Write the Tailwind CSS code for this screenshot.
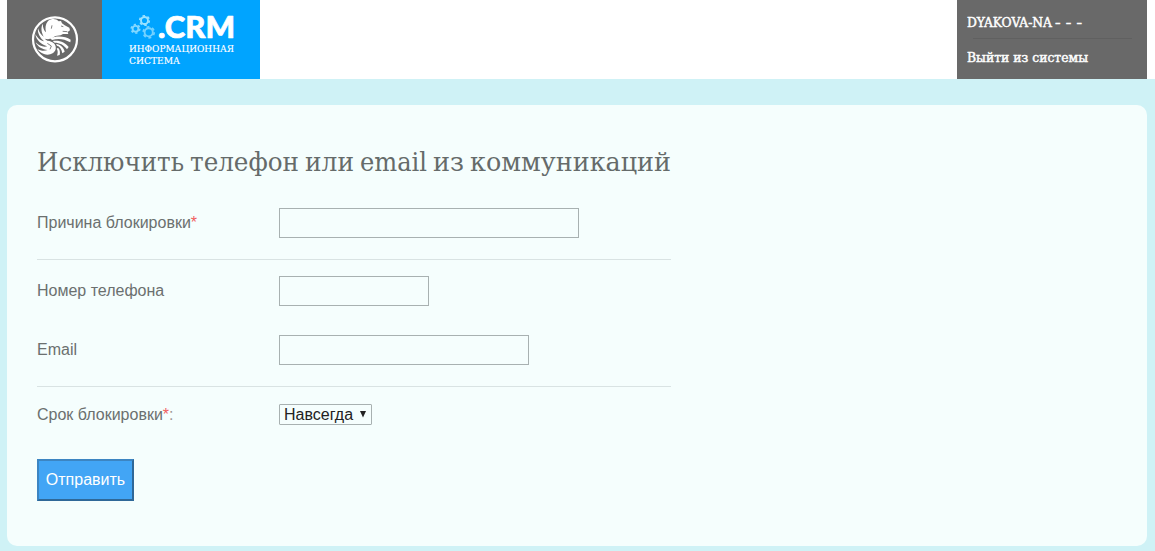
<!DOCTYPE html>
<html lang="ru">
<head>
<meta charset="utf-8">
<title>CRM</title>
<script src="https://cdn.jsdelivr.net/npm/@tailwindcss/browser@4"></script>
</head>
<body class="h-[551px] overflow-hidden bg-[#cff2f6] font-['Liberation_Sans',Arial,sans-serif] text-base text-[#6b706f]">
<header class="flex h-[79px] justify-between bg-white px-[7px] pr-2">
  <div class="flex">
    <div class="flex w-[95px] items-center justify-center bg-[#696969]">
      <svg class="h-[79px] w-[95px]" viewBox="0 0 95 79" fill="#fff">
        <circle cx="48" cy="39.300" r="22" fill="none" stroke="#fff" stroke-width="2.200"/>
        <g transform="translate(21 12) scale(.3333)">
          <path d="M60 27C72 18 84 20 92 28L99 27 102 34 110 40 124 47 126 55 119 60 121 66 105 66 98 70 82 72 72 79 60 82 50 80 58 86C76 88 86 98 83 112 79 126 62 131 48 126 38 122 32 117 28 111 38 117 50 118 59 114 44 113 29 105 23 91 34 102 46 106 58 103 40 98 24 84 22 66 30 80 38 86 48 88 36 77 28 64 30 49 34 62 40 70 47 74 40 60 38 48 44 35 45 48 48 56 54 61 51 48 52 36 60 27Z"/>
          <path d="M66 78C88 70 112 72 128 83L127 91C108 80 90 78 72 84ZM74 87C94 83 112 91 122 105L117 112C107 98 95 92 80 92ZM84 96C98 98 107 106 110 119L103 124C101 111 95 103 87 101ZM90 107C96 113 97 121 95 129L87 131C90 123 90 115 86 110Z"/>
          <path d="M72 40 70 50M99 42 106 44M104 58 118 59M58 94 70 102 66 112" fill="none" stroke="#696969" stroke-width="2.500"/>
        </g>
      </svg>
    </div>
    <svg class="h-[79px] w-[158px] bg-[#00a4ff]" viewBox="0 0 158 79" fill="#fff">
      <g fill="none" stroke="#9be2ff" stroke-width="1.900">
        <g><circle cx="42.500" cy="20.500" r="3.500"/><circle cx="42.500" cy="20.500" r="4.800" stroke-width="1.600" stroke-dasharray="2.500 2.526"/></g>
        <g opacity=".85"><circle cx="33.500" cy="28.800" r="2.900"/><circle cx="33.500" cy="28.800" r="4.300" stroke-width="1.600" stroke-dasharray="2.250 2.253"/></g>
        <g opacity=".75"><circle cx="46.700" cy="32.300" r="4.100"/><circle cx="46.700" cy="32.300" r="5.500" stroke-width="1.700" stroke-dasharray="2.900 2.860"/></g>
      </g>
      <text x="56" y="37.500" textLength="77" lengthAdjust="spacingAndGlyphs" font-family="Lato, sans-serif" font-weight="900" font-size="30" stroke="#fff" stroke-width=".7" stroke-linejoin="round">.CRM</text>
      <g font-family="'DejaVu Serif Condensed', 'DejaVu Serif', serif" font-size="10" stroke="#fff" stroke-width=".15">
        <text x="27" y="51.500" textLength="105" lengthAdjust="spacingAndGlyphs">ИНФОРМАЦИОННАЯ</text>
        <text x="27" y="64" textLength="51" lengthAdjust="spacingAndGlyphs">СИСТЕМА</text>
      </g>
    </svg>
  </div>
  <div class="w-[190px] bg-[#696969] text-white">
    <svg class="h-[79px] w-[190px]" viewBox="0 0 190 79" fill="#fff" font-family="'DejaVu Serif Condensed', 'DejaVu Serif', serif" font-size="12" stroke="#fff" stroke-width=".4">
      <text x="10" y="27" textLength="85" lengthAdjust="spacingAndGlyphs">DYAKOVA-NA</text>
      <text x="98" y="27" textLength="27" lengthAdjust="spacingAndGlyphs">- - -</text>
      <path d="M16 38.500H175" stroke="#606060" stroke-width="1"/>
      <text x="10" y="62" textLength="121" lengthAdjust="spacingAndGlyphs">Выйти из системы</text>
    </svg>
  </div>
</header>
<main class="mx-[7px] mt-[26px] mr-2 h-[441px] rounded-[10px] bg-[#f5fefd] px-[30px] pt-[35px]">
  <form class="w-[634px]">
    <h1 class="h-[52px]">
      <svg class="h-[52px] w-[634px]" viewBox="0 0 634 52" fill="#656b6a" font-family="'DejaVu Serif Condensed', 'DejaVu Serif', serif" font-size="26">
        <text x="0" y="31" textLength="147" lengthAdjust="spacingAndGlyphs">Исключить</text>
        <text x="153" y="31" textLength="109" lengthAdjust="spacingAndGlyphs">телефон</text>
        <text x="268" y="31" textLength="49" lengthAdjust="spacingAndGlyphs">или</text>
        <text x="323" y="31" textLength="67" lengthAdjust="spacingAndGlyphs">email</text>
        <text x="396" y="31" textLength="31" lengthAdjust="spacingAndGlyphs">из</text>
        <text x="433" y="31" textLength="201" lengthAdjust="spacingAndGlyphs">коммуникаций</text>
      </svg>
    </h1>
    <div class="flex h-[68px] items-start border-b border-[#d9e3e3] pt-4">
      <label class="w-[242px] pt-[3px]">Причина блокировки<span class="text-[#f0605f]">*</span></label>
      <input class="h-[30px] w-[300px] border border-[#a8b1b1]">
    </div>
    <div class="flex h-[67px] items-start pt-4">
      <label class="w-[242px] pt-[3px]">Номер телефона</label>
      <input class="h-[30px] w-[150px] border border-[#a8b1b1]">
    </div>
    <div class="flex h-[60px] items-start border-b border-[#d9e3e3] pt-2">
      <label class="w-[242px] pt-[3px]">Email</label>
      <input class="h-[30px] w-[250px] border border-[#a8b1b1]">
    </div>
    <div class="flex h-[72px] items-start pt-[17px]">
      <label class="w-[242px] -mt-px">Срок блокировки<span class="text-[#f0605f]">*</span><span class="text-[#a09795]">:</span></label>
      <div class="flex h-[21px] w-[93px] items-center justify-between rounded-[1px] border border-[#a8b1b1] pr-[5px] pl-1 leading-[19px] text-[#222]">Навсегда<svg class="h-[7px] w-[6px]" viewBox="0 0 6 7" fill="#222"><path d="M0 0h6L3 6.500z"/></svg></div>
    </div>
    <button type="button" class="h-[42px] w-[97px] border-2 border-t-[#3c85c2] border-r-[#2f6898] border-b-[#2f6898] border-l-[#3c85c2] bg-[#42a5f5] text-white">Отправить</button>
  </form>
</main>
</body>
</html>
